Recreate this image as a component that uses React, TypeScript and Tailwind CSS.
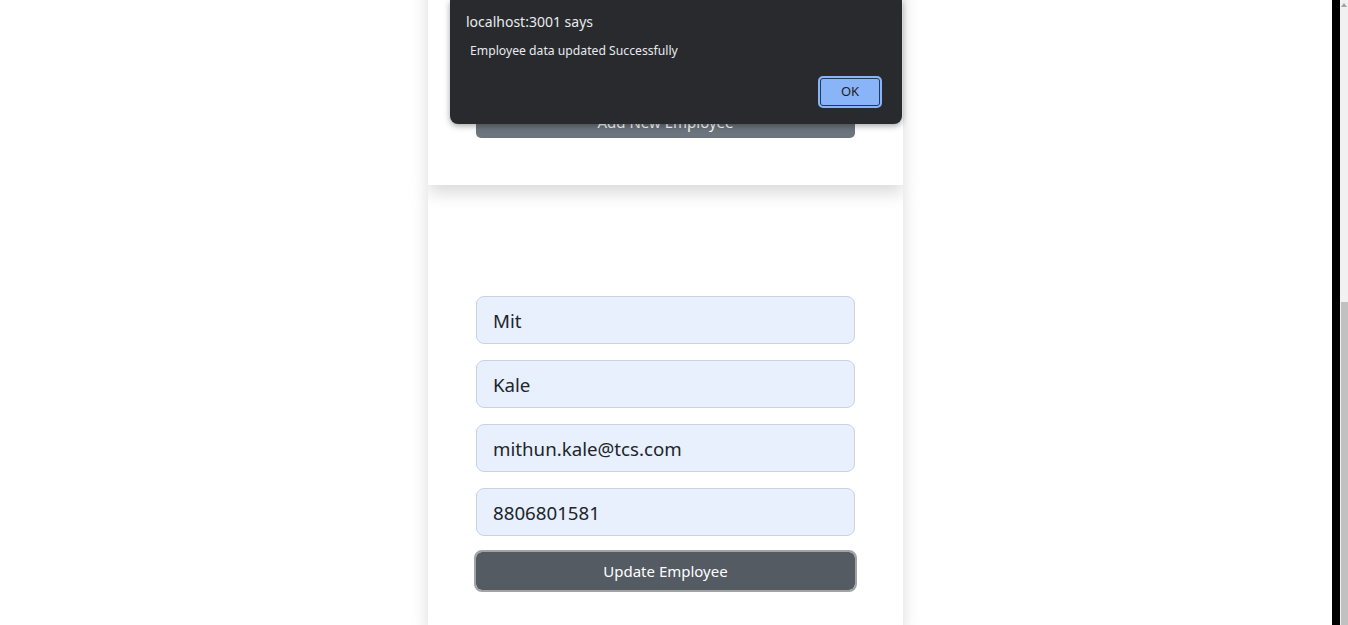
export default function App() {
  const fields = ['Mit', 'Kale', 'mithun.kale@tcs.com', '8806801581'];

  return (
    <div className="relative flex h-[625px] w-full overflow-hidden bg-white font-['Noto_Sans',sans-serif]">
      {/* page */}
      <div className="flex flex-1 flex-col items-start pl-[428px]">
        <div className="relative z-10 -mt-[100px] flex h-[285px] w-[475px] shrink-0 flex-col justify-end bg-white px-12 pb-[47px] shadow-[0_8px_16px_rgba(0,0,0,0.15)]">
          <button className="h-[38px] w-full rounded-[5px] bg-[#6c757d] pt-[7px] text-[15px] text-white">
            Add New Employee
          </button>
        </div>

        <div className="flex w-[475px] flex-1 flex-col bg-white px-12 pt-[111px] shadow-[0_8px_16px_rgba(0,0,0,0.15)]">
          {fields.map(f => (
            <div
              key={f}
              className="mb-4 flex h-[48px] items-center rounded-lg border border-[#c9d2de] bg-[#e8f0fe] px-4 pt-[3px] text-[18.7px] text-[#212529]"
            >
              {f}
            </div>
          ))}
          <button className="h-[38px] w-full rounded-[6px] bg-[#545b62] text-[15px] text-white outline-2 outline-[#a3a3a3]">
            Update Employee
          </button>
        </div>
      </div>

      {/* dark strip + scrollbar */}
      <div className="w-2 bg-black" />
      <div className="relative w-2 bg-[#f1f1f1]">
        <div className="mx-auto mt-[3px] h-0 w-0 border-x-[3px] border-b-[4px] border-x-transparent border-b-[#a3a3a3]" />
        <div className="absolute bottom-0 left-[1px] right-0 top-[302px] bg-[#c1c1c1]" />
      </div>

      {/* alert dialog */}
      <div className="absolute left-[450px] top-0 z-20 h-[124px] w-[452px] rounded-b-lg bg-[#292a2d] shadow-[0_2px_6px_rgba(0,0,0,0.35)]">
        <div className="absolute left-4 top-[11px] text-[14px] text-[#e8eaed]">localhost:3001 says</div>
        <div className="absolute left-5 top-[42px] text-[12.2px] text-[#e8eaed]">Employee data updated Successfully</div>
        <button className="absolute left-[368px] top-[76px] flex h-[32px] w-[64px] items-center justify-center rounded-[5px] border-2 border-[#8ab4f8] bg-[#8ab4f8] text-[13px] text-[#202124] shadow-[inset_0_0_0_1px_#1f3a60]">
          OK
        </button>
      </div>
    </div>
  );
}
